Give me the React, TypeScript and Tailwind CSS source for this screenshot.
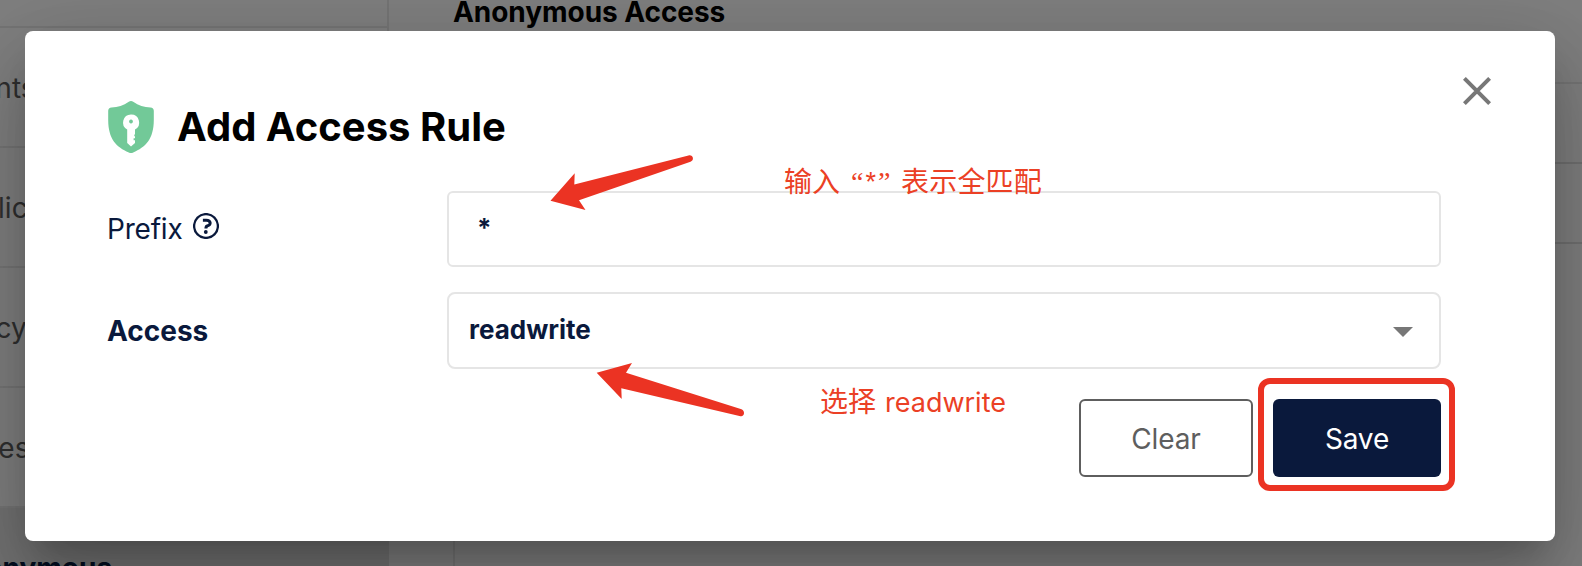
import React from "react";

const navItems = ["Events", "Replication", "Lifecycle", "Access"];

function ShieldKeyIcon() {
  return (
    <svg className="h-[52px] w-[46px] shrink-0" viewBox="0 0 46 52">
      <path
        fill="#72c998"
        d="M20.8 0.8Q23-.7 25.2.8C30.600 4.600 36 6.300 42.500 6.500Q45.700 6.700 45.800 9.800V19C45.800 38 37.500 46.200 25.200 51.500Q23 52.500 20.800 51.500C8.500 46.200.2 38 .2 19V9.800Q.3 6.700 3.500 6.500C10 6.300 15.400 4.600 20.800.8Z"
      />
      <path
        fill="#fff"
        fillRule="evenodd"
        d="M23 13.500a8 8 0 0 1 4 15V33.500H26.300V35.200H27V37.300H25.600V39.300H27V42L23 45.500L19.200 42V28.500A8 8 0 0 1 23 13.500ZM23 18.600a1.900 1.900 0 1 0 .01 0Z"
      />
    </svg>
  );
}

function HelpIcon() {
  return (
    <svg className="h-[26px] w-[26px]" viewBox="0 0 26 26" fill="none" stroke="#0a193c">
      <circle cx="13" cy="13" r="11.900" strokeWidth="2.300" />
      <path d="M9.900 7.300H13.200C18.200 7.300 18.200 12.200 14.700 12.700Q12.900 13 12.900 15.600" strokeWidth="3" />
      <circle cx="12.800" cy="19" r="1.900" fill="#0a193c" stroke="none" />
    </svg>
  );
}

function Background() {
  return (
    <div className="flex h-full w-full overflow-hidden bg-white">
      <nav className="flex w-[389px] shrink-0 flex-col border-r-2 border-[#eaeaea] text-[28px] text-[#5e5e5e]">
        <div className="h-7 shrink-0 border-b-2 border-[#eaeaea]" />
        {navItems.map((item) => (
          <div key={item} className="flex h-[120px] shrink-0 items-center border-b-2 border-[#eaeaea] pt-0.5">
            <span className="-ml-[53px]">{item}</span>
          </div>
        ))}
        <div className="-mr-0.5 flex h-[120px] shrink-0 items-center bg-[#e5e5e5] font-bold text-[#081c42]">
          <span className="-ml-[53px]">Anonymous</span>
        </div>
      </nav>
      <main className="flex min-w-0 flex-1 flex-col pl-16">
        <h2 className="-mt-[5px] h-[34px] text-[28px] leading-[34px] font-bold tracking-[-0.05px] text-black">
          Anonymous Access
        </h2>
        <div className="mt-[53px] flex h-[600px] shrink-0 flex-col border-2 border-r-0 border-[#eaeaea]">
          <div className="h-20 border-b-2 border-[#e0e0e0]" />
          <div className="h-20 border-b-2 border-[#e0e0e0]" />
        </div>
      </main>
    </div>
  );
}

function Arrow({ d }: { d: string }) {
  return <path d={d} fill="#eb3323" />;
}

export default function App() {
  return (
    <div className="relative h-[566px] w-[1582px] overflow-hidden font-[Inter,'Noto_Sans_CJK_SC',sans-serif]">
      <Background />
      <div className="absolute inset-0 bg-black/50 pt-[31px] pl-[25px]">
        <section
          role="dialog"
          className="flex h-[510px] w-[1530px] flex-col rounded-lg bg-white pl-[83px] shadow-[0_22px_30px_-14px_rgba(0,0,0,0.2),0_48px_76px_6px_rgba(0,0,0,0.14),0_18px_92px_16px_rgba(0,0,0,0.12)]"
        >
          <header className="flex h-[160px] items-start pt-[46px] pr-[64px]">
            <div className="mt-6 flex items-center gap-[23px]">
              <ShieldKeyIcon />
              <h1 className="text-[40px] leading-[52px] font-bold text-black">Add Access Rule</h1>
            </div>
            <svg className="ml-auto h-7 w-7" viewBox="0 0 28 28" stroke="#777" strokeWidth="4">
              <path d="M1.400 1.400L26.600 26.600M26.600 1.400L1.400 26.600" />
            </svg>
          </header>

          <div className="-ml-px flex h-[76px] w-[1334px] text-[#0a193c]">
            <label className="flex w-[340px] items-center gap-2.5 text-[28px]">
              <span className="tracking-[-0.2px]">Prefix</span>
              <span className="-mt-1.5">
                <HelpIcon />
              </span>
            </label>
            <div className="flex flex-1 items-center rounded-md border-2 border-[#e5e5e5] px-7 text-[26px] font-bold">
              <span className="-mt-[3px]">*</span>
            </div>
          </div>

          <div className="mt-[25px] -ml-px flex h-[77px] w-[1334px] text-[#0a193c]">
            <label className="flex w-[340px] items-center text-[28px] font-bold">Access</label>
            <div className="flex flex-1 items-center justify-between rounded-lg border-2 border-[#e5e5e5] pr-[26px] pl-5 text-[26px] font-bold">
              <span className="-mt-[3px]">readwrite</span>
              <svg className="mt-0.5 h-2.5 w-5" viewBox="0 0 20 10">
                <path d="M0 0H20L10 10Z" fill="#777" />
              </svg>
            </div>
          </div>

          <footer className="mt-[30px] flex h-[78px] w-[1333px] justify-end gap-5 text-[28px] tracking-[-0.15px]">
            <button className="w-[174px] rounded-md border-2 border-[#5e5e5e] pt-0.5 text-[#5e5e5e]">Clear</button>
            <button className="relative w-[168px] rounded-md bg-[#0a193c] pt-0.5 text-white">
              Save
              <span className="absolute -top-[21.500px] -left-[15px] h-[113.500px] w-[197px] rounded-xl border-[6px] border-[#eb3323]" />
            </button>
          </footer>
        </section>
      </div>

      <svg className="pointer-events-none absolute inset-0 h-[566px] w-[1582px]" viewBox="0 0 1582 566">
        <Arrow d="M550.500 200.700L574.700 173.300L574.300 184.500L688.500 155.400C693.500 154.500 694.500 160.500 690.500 161.700L579 200.300L585.500 210Z" />
        <Arrow d="M596.700 372.700L632 363L626 372.700L741.500 409.300C745.500 411 744.500 417 740.500 416.200L621.300 388.300L621.700 399Z" />
      </svg>
      <p className="absolute top-[162px] left-[784px] flex text-[28px] leading-10 text-[#eb4025]">
        <span className="w-[67px]">输入</span>
        <span className="w-[50px] font-['Liberation_Serif',serif]">
          “<span className="mx-0.5 font-['Liberation_Sans',sans-serif] text-[27px]">*</span>”
        </span>
        <span className="tracking-[0.2px]">表示全匹配</span>
      </p>
      <p className="absolute top-[382px] left-[820px] flex gap-[9px] text-[28px] leading-10 text-[#eb4025]">
        <span>选择</span>
        <span className="pt-px text-[27px]">readwrite</span>
      </p>
    </div>
  );
}
